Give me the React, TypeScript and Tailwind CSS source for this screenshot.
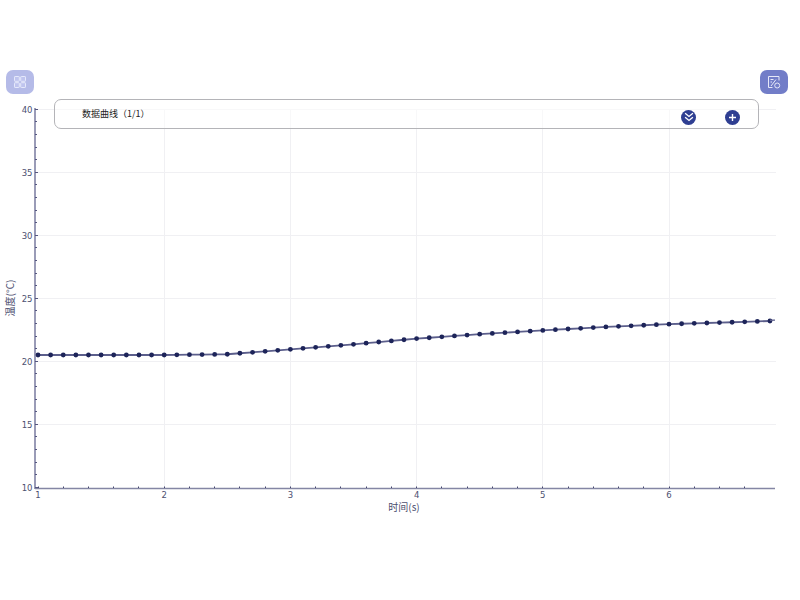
const X0 = 38;
const X_STEP = 126.2;
const Y10 = 487.3;
const Y_STEP = 12.6;

const px = (t: number) => X0 + (t - 1) * X_STEP;
const py = (v: number) => Y10 - (v - 10) * Y_STEP;
// snap hairlines to a pixel so they stay thin
const snap = (n: number) => Math.floor(n) + 0.5;

// temperature curve, read off the plot
const knots: [number, number][] = [
  [1, 20.5],
  [2, 20.5],
  [2.5, 20.56],
  [3, 20.95],
  [3.5, 21.35],
  [4, 21.8],
  [4.5, 22.15],
  [5, 22.45],
  [5.5, 22.73],
  [6, 22.95],
  [6.5, 23.1],
  [6.8, 23.2],
];

function valueAt(t: number) {
  for (let i = 1; i < knots.length; i++) {
    const [t0, v0] = knots[i - 1];
    const [t1, v1] = knots[i];
    if (t <= t1 + 1e-6) return v0 + ((t - t0) / (t1 - t0)) * (v1 - v0);
  }
  return knots[knots.length - 1][1];
}

const points = Array.from({ length: 59 }, (_, i) => {
  const t = 1 + i * 0.1;
  return { x: px(t), y: py(valueAt(t)) };
});

const xMajor = [1, 2, 3, 4, 5, 6];
const yMajor = [10, 15, 20, 25, 30, 35, 40];
const xMinor = Array.from({ length: 29 }, (_, i) => 1 + i * 0.2);
const yMinor = Array.from({ length: 31 }, (_, i) => 10 + i);

function Chart() {
  return (
    <svg width={800} height={506} viewBox="0 94 800 506" className="block">
      {xMajor.slice(1).map((t) => (
        <line key={t} x1={snap(px(t))} x2={snap(px(t))} y1={110} y2={488} stroke="#f0f0f3" />
      ))}
      {yMajor.slice(1).map((v) => (
        <line key={v} x1={36} x2={776} y1={snap(py(v))} y2={snap(py(v))} stroke="#f0f0f3" />
      ))}

      <line x1={35} x2={35} y1={108} y2={489} stroke="#6f7199" strokeWidth={1.4} />
      <line x1={35} x2={775} y1={488.5} y2={488.5} stroke="#8486a4" strokeWidth={1.6} />

      {yMinor.map((v) => (
        <line
          key={v}
          x1={35}
          x2={v % 5 === 0 ? 38 : 37}
          y1={snap(py(v))}
          y2={snap(py(v))}
          stroke="#55577f"
        />
      ))}
      {xMinor.map((t) => (
        <line key={t} x1={snap(px(t))} x2={snap(px(t))} y1={486.5} y2={488} stroke="#44466e" />
      ))}

      <g fontFamily='"DejaVu Sans", sans-serif' fontSize={8.5} fill="#4d5070">
        {yMajor.map((v) => (
          <text key={v} x={32.5} y={py(v) + 4} textAnchor="end">
            {v}
          </text>
        ))}
        {xMajor.map((t) => (
          <text key={t} x={px(t)} y={498} textAnchor="middle">
            {t}
          </text>
        ))}
      </g>

      <g fontFamily='"Noto Sans CJK SC", sans-serif' fontSize={10} fill="#4d5070">
        <text x={404} y={511} textAnchor="middle">
          时间(s)
        </text>
        <text x={0} y={0} transform="translate(14 298) rotate(-90)" textAnchor="middle">
          温度(°C)
        </text>
      </g>

      <polyline
        points={points.map((p) => `${p.x},${p.y}`).join(" ")}
        fill="none"
        stroke="#5c5f8c"
        strokeWidth={1.8}
      />
      {points.map((p, i) => (
        <circle key={i} cx={p.x} cy={p.y} r={2.4} fill="#1d2459" />
      ))}
      <line x1={770} x2={775} y1={320.3} y2={320.1} stroke="#5c5f8c" strokeWidth={1.4} />
    </svg>
  );
}

function GridIcon() {
  return (
    <svg width={12} height={12} viewBox="0 0 12 12" fill="#bfc4ee" stroke="#e6e9fb" strokeWidth={1}>
      <rect x={0.5} y={0.5} width={4.8} height={4.8} rx={0.6} />
      <rect x={6.7} y={0.5} width={4.8} height={4.8} rx={0.6} />
      <rect x={0.5} y={6.7} width={4.8} height={4.8} rx={0.6} />
      <rect x={6.7} y={6.7} width={4.8} height={4.8} rx={0.6} />
    </svg>
  );
}

function ChartSwitchIcon() {
  return (
    <svg width={13} height={13} viewBox="0 0 13 13" fill="none" stroke="#e6e8f8" strokeWidth={1}>
      <path d="M11 4.5V.5H.5v11h4" />
      <path d="M2.5 3.5h3M2.5 6h1.5" />
      <path d="M3 10 8 3.5" />
      <circle cx={9.2} cy={9.5} r={2.5} />
    </svg>
  );
}

export default function App() {
  return (
    <div className="relative h-[600px] w-[800px] overflow-hidden bg-white pt-[70px]">
      <div className="flex h-[24px] justify-between pl-[6px] pr-[12px]">
        <button
          type="button"
          className="flex h-[24px] w-[28px] items-center justify-center rounded-[7px] bg-[#b5bbe8]"
        >
          <GridIcon />
        </button>
        <button
          type="button"
          className="flex h-[24px] w-[28px] items-center justify-center rounded-[7px] bg-[#727dc8]"
        >
          <ChartSwitchIcon />
        </button>
      </div>

      <Chart />

      <div className="absolute left-[54px] top-[99px] flex h-[30px] w-[705px] items-center rounded-[7px] border border-[#b4b4b8] bg-white/50 pl-[27px] font-['Noto_Sans_CJK_SC',sans-serif] text-[9px] text-[#222]">
        <span className="flex-1">数据曲线（1/1）</span>
        <span className="mr-[29px] mt-[6px] flex h-[15px] w-[15px] items-center justify-center rounded-full bg-[#2f3f92]">
          <svg width={10} height={10} viewBox="0 0 9 9" fill="none" stroke="#fff" strokeWidth={1.2}>
            <path d="M1 1.2 4.5 4 8 1.2" />
            <path d="M1 4.7 4.5 7.6 8 4.7" />
          </svg>
        </span>
        <span className="mr-[18px] mt-[6px] flex h-[15px] w-[15px] items-center justify-center rounded-full bg-[#2f3f92]">
          <svg width={9} height={9} viewBox="0 0 9 9" fill="none" stroke="#fff" strokeWidth={1.4}>
            <path d="M4.5 1v7M1 4.5h7" />
          </svg>
        </span>
      </div>
    </div>
  );
}
